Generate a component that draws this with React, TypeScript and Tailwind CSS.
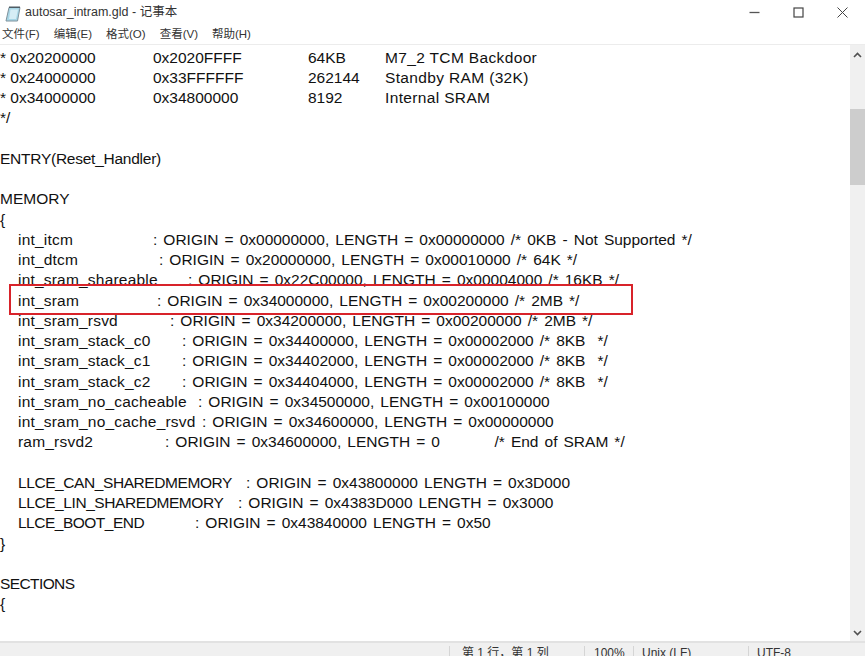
const lines = [
  { text: "* 0x20200000", a: "0x2020FFFF", b: "64KB", c: "M7_2 TCM Backdoor" },
  { text: "* 0x24000000", a: "0x33FFFFFF", b: "262144", c: "Standby RAM (32K)" },
  { text: "* 0x34000000", a: "0x34800000", b: "8192", c: "Internal SRAM" },
];

const memory = [
  { name: "int_itcm", pad: "w-[153px] tracking-[0.2px]", rest: ": ORIGIN = 0x00000000, LENGTH = 0x00000000 /* 0KB - Not Supported */" },
  { name: "int_dtcm", pad: "w-[159px] tracking-[0.2px]", rest: ": ORIGIN = 0x20000000, LENGTH = 0x00010000 /* 64K */" },
  { name: "int_sram_shareable", pad: "w-[188px] tracking-[0.2px]", rest: ": ORIGIN = 0x22C00000, LENGTH = 0x00004000 /* 16KB */" },
  { name: "int_sram", pad: "w-[157px] tracking-[0.2px]", rest: ": ORIGIN = 0x34000000, LENGTH = 0x00200000 /* 2MB */" },
  { name: "int_sram_rsvd", pad: "w-[170px] tracking-[0.2px]", rest: ": ORIGIN = 0x34200000, LENGTH = 0x00200000 /* 2MB */" },
  { name: "int_sram_stack_c0", pad: "w-[182px] tracking-[0.2px]", rest: ": ORIGIN = 0x34400000, LENGTH = 0x00002000 /* 8KB  */" },
  { name: "int_sram_stack_c1", pad: "w-[182px] tracking-[0.2px]", rest: ": ORIGIN = 0x34402000, LENGTH = 0x00002000 /* 8KB  */" },
  { name: "int_sram_stack_c2", pad: "w-[182px] tracking-[0.2px]", rest: ": ORIGIN = 0x34404000, LENGTH = 0x00002000 /* 8KB  */" },
  { name: "int_sram_no_cacheable", pad: "w-[198px] tracking-[0.2px]", rest: ": ORIGIN = 0x34500000, LENGTH = 0x00100000" },
  { name: "int_sram_no_cache_rsvd", pad: "w-[202px] tracking-[0.2px]", rest: ": ORIGIN = 0x34600000, LENGTH = 0x00000000" },
  { name: "ram_rsvd2", pad: "w-[165px] tracking-[0.2px]", rest: ": ORIGIN = 0x34600000, LENGTH = 0         /* End of SRAM */" },
];

const llce = [
  { name: "LLCE_CAN_SHAREDMEMORY", pad: "w-[246px] tracking-[-0.42px]", rest: ": ORIGIN = 0x43800000 LENGTH = 0x3D000" },
  { name: "LLCE_LIN_SHAREDMEMORY", pad: "w-[238px] tracking-[-0.42px]", rest: ": ORIGIN = 0x4383D000 LENGTH = 0x3000" },
  { name: "LLCE_BOOT_END", pad: "w-[195px] tracking-[-0.5px]", rest: ": ORIGIN = 0x43840000 LENGTH = 0x50" },
];

function Line({ children }: { children?: React.ReactNode }) {
  return <div className="h-[20.26px] whitespace-pre leading-[20.26px]">{children}</div>;
}

function NamedLine({ name, pad, rest }: { name: string; pad: string; rest: string }) {
  return (
    <Line>
      <span className={`inline-block pl-[18px] ${pad}`}>{name}</span>
      <span className="[word-spacing:1.75px]">{rest}</span>
    </Line>
  );
}

function NotepadIcon() {
  return (
    <svg width="18" height="18" viewBox="0 0 18 18" className="shrink-0">
      <path d="M5 3.5h11l-2.5 13.5H2z" fill="#a8d6e6" stroke="#7f929c" />
      <path d="M6.5 5.5h7.5l-2 9.5H5z" fill="#d6edf5" />
      <path d="M5 2.5h11v1.5H5z" fill="#4f5c64" />
    </svg>
  );
}

export default function App() {
  return (
    <div className="flex h-[656px] w-[865px] flex-col overflow-hidden bg-white font-['Liberation_Sans','Noto_Sans_CJK_SC',sans-serif] text-[#111]">
      <div className="flex h-[25px] items-center pl-[4px]">
        <NotepadIcon />
        <span className="ml-[3px] text-[12.5px] text-[#333]">autosar_intram.gld - 记事本</span>
        <div className="ml-auto flex items-center gap-[33px] pr-[17px]">
          <svg width="11" height="11" viewBox="0 0 11 11"><path d="M0.5 5.5h10" stroke="#555" strokeWidth="1.3" /></svg>
          <svg width="11" height="11" viewBox="0 0 11 11"><rect x="1" y="1" width="9" height="9" fill="none" stroke="#444" strokeWidth="1.2" /></svg>
          <svg width="11" height="11" viewBox="0 0 11 11"><path d="M0.5 0.5l10 10M10.5 0.5l-10 10" stroke="#444" /></svg>
        </div>
      </div>
      <div className="flex h-[20px] items-center gap-[14px] border-b border-[#ececec] pl-[2px] text-[11.5px] text-[#333]">
        <span>文件(F)</span>
        <span>编辑(E)</span>
        <span>格式(O)</span>
        <span>查看(V)</span>
        <span>帮助(H)</span>
      </div>
      <div className="flex min-h-0 flex-1">
        <div className="relative min-w-0 flex-1 pt-[2.5px] text-[15.5px]">
          {lines.map((l) => (
            <Line key={l.text}>
              <span className="inline-block w-[153px]">{l.text}</span>
              <span className="inline-block w-[155px]">{l.a}</span>
              <span className="inline-block w-[77px]">{l.b}</span>
              <span className="tracking-[0.35px]">{l.c}</span>
            </Line>
          ))}
          <Line>*/</Line>
          <Line />
          <Line><span className="tracking-[-0.25px]">ENTRY(Reset_Handler)</span></Line>
          <Line />
          <Line>MEMORY</Line>
          <Line>{"{"}</Line>
          {memory.map((m) => (
            <NamedLine key={m.name} {...m} />
          ))}
          <Line />
          {llce.map((m) => (
            <NamedLine key={m.name} {...m} />
          ))}
          <Line>{"}"}</Line>
          <Line />
          <Line><span className="tracking-[-0.6px]">SECTIONS</span></Line>
          <Line>{"{"}</Line>
          <div className="absolute left-[9px] top-[239px] h-[31px] w-[624px] border-2 border-[#d8232a]" />
        </div>
        <div className="flex w-[15px] flex-col bg-[#f0f0f0]">
          <div className="flex h-[64px] justify-center pt-[7px]">
            <svg width="9" height="6" viewBox="0 0 9 6"><path d="M1 5l3.5-3.5L8 5" fill="none" stroke="#505050" strokeWidth="1.6" /></svg>
          </div>
          <div className="h-[76px] bg-[#cdcdcd]" />
          <div className="flex flex-1 items-end justify-center pb-[5px]">
            <svg width="9" height="6" viewBox="0 0 9 6"><path d="M1 1l3.5 3.5L8 1" fill="none" stroke="#505050" strokeWidth="1.6" /></svg>
          </div>
        </div>
      </div>
      <div className="flex h-[15px] items-start overflow-hidden border-t-2 border-[#e2e2e2] bg-[#f0f0f0] pt-[3px] text-[12px] leading-[15px] text-[#333]">
        <div className="w-[449px]" />
        <div className="w-[135px] border-l border-[#d5d5d5] pl-[12px]">第 1 行，第 1 列</div>
        <div className="w-[49px] border-l border-[#d5d5d5] pl-[9px]">100%</div>
        <div className="w-[115px] border-l border-[#d5d5d5] pl-[8px]">Unix (LF)</div>
        <div className="border-l border-[#d5d5d5] pl-[8px]">UTF-8</div>
      </div>
    </div>
  );
}
